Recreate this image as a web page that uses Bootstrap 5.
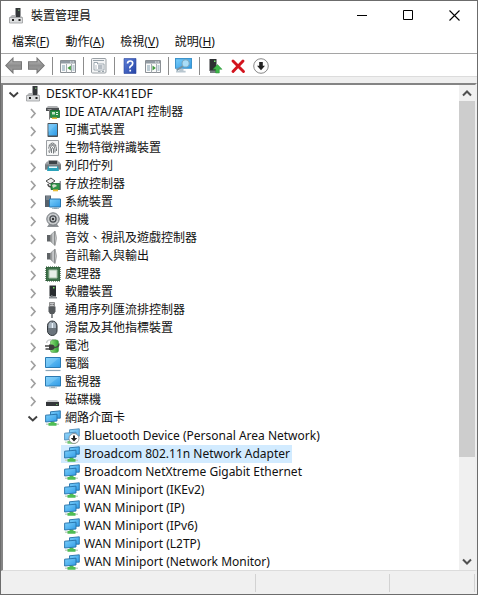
<!DOCTYPE html>
<html lang="zh-Hant">
<head>
<meta charset="utf-8">
<meta name="viewport" content="width=device-width, initial-scale=1">
<title>裝置管理員</title>
<link href="https://cdn.jsdelivr.net/npm/bootstrap@5.3.0/dist/css/bootstrap.min.css" rel="stylesheet">
<style>
  body { font-family: "Noto Sans", "Noto Sans CJK TC", sans-serif; font-size: 12px; line-height: 18px; color: #111; }
  button { background: none; border: 0; padding: 0; color: inherit; }
  svg { display: block; flex: none; }
  .window { border: 1px solid #6c6c6c; background: #fff; }
  .titlebar { height: 30px; padding-left: 8px; gap: 6px; }
  .caption-btn { width: 46px; height: 28px; }
  .menubar { height: 22px; padding-left: 11px; gap: 16px; }
  .toolbar { height: 24px; border-top: 1px solid #a5a5a5; border-bottom: 1px solid #dcdcdc; padding: 2px 0 0 1px; }
  .tool-btn { width: 23px; height: 20px; }
  .divider { width: 8px; height: 18px; background: linear-gradient(#8c8c8c, #8c8c8c) center / 1px 100% no-repeat; }
  .strip { height: 6px; background: #efefef; }
  .pane { border-top: 2px solid #848484; border-left: 2px solid #848484; border-right: 2px solid #efefef; border-bottom: 1px solid #dcdcdc; min-height: 0; }
  .tree { padding-left: 3px; min-width: 0; white-space: nowrap; }
  .tree ul { padding-left: 19px; }
  .node { height: 18px; }
  .toggle { width: 17px; height: 18px; }
  .leaf { padding-left: 17px; }
  .item { padding: 0 2px 0 3px; gap: 4px; height: 18px; }
  .item.selected { background: #d2ebff; }
  .scroller { width: 16px; background: #f0f0f0; }
  .scroller button { height: 16px; }
  .thumb { background: #cdcdcd; flex: 355 0 0; }
  .track { flex: 97 0 0; }
  .statusbar { height: 23px; background: #f0f0f0; padding: 3px 2px 2px 0; }
  .cell { border-right: 1px solid #d2d2d2; }
  .cell-a { flex: 256 0 0; }
  .cell-b { flex: 133 0 0; }
  .cell-c { flex: 85 0 0; }
</style>
</head>
<body>
<svg width="0" height="0" class="position-absolute" aria-hidden="true">
  <defs>
    <linearGradient id="blue" x1="0" y1="0" x2="1" y2="1"><stop offset="0" stop-color="#7cd0fb"/><stop offset="1" stop-color="#2f9ae6"/></linearGradient>
    <linearGradient id="grey" x1="0" y1="0" x2="0" y2="1"><stop offset="0" stop-color="#c4c4c4"/><stop offset=".5" stop-color="#8d8d8d"/><stop offset="1" stop-color="#a8a8a8"/></linearGradient>
    <linearGradient id="cone" x1="0" y1="0" x2="1" y2="0"><stop offset="0" stop-color="#777"/><stop offset=".6" stop-color="#d5d8da"/><stop offset="1" stop-color="#777"/></linearGradient>
    <linearGradient id="navy" x1="0" y1="0" x2="1" y2="1"><stop offset="0" stop-color="#5d7fd8"/><stop offset="1" stop-color="#2443a5"/></linearGradient>
    <linearGradient id="cell" x1="0" y1="0" x2="1" y2="0"><stop offset="0" stop-color="#8fe07a"/><stop offset="1" stop-color="#2d9c31"/></linearGradient>

    <symbol id="closed" viewBox="0 0 16 18"><path d="M6 6l4 4.500L6 15" fill="none" stroke="#a0a0a0" stroke-width="1.700"/></symbol>
    <symbol id="open" viewBox="0 0 16 18"><path d="M3.500 7.500l4.300 4 4.200-4" fill="none" stroke="#404040" stroke-width="1.900"/></symbol>

    <symbol id="root" viewBox="0 0 16 16"><path d="M6.500 0h5v9.500h-5z" fill="#34373a"/><path d="M9 1.500h1.500V3H9z" fill="#6b9c68"/><path d="M.500 9.500L3 7h3.500v2.500h5V7.500L13.500 9.500z" fill="#b4b6b8"/><path d="M.500 9.500h13v5.500H.500z" fill="#dcdedf" stroke="#9a9c9e" stroke-width=".8"/><path d="M3 11h2v2H3zM9.500 11h2v2h-2z" fill="#222"/></symbol>
    <symbol id="ide" viewBox="0 0 16 16"><path d="M1 4l2-2h9l2 2v3H1z" fill="#b0b2b4"/><path d="M1 4h13v3H1z" fill="#4c4f52"/><path d="M2.500 5h4v1h-4z" fill="#999"/><path d="M5.500 6.500h9v7h-9z" fill="#278f43" stroke="#176a2e" stroke-width=".8"/><path d="M7 8h3v2.500H7z" fill="#bfe2c5"/><path d="M11 8h2v1h-2zM11 10h2v1h-2z" fill="#e4f3e6"/><path d="M7 13.500h5v1.500H7z" fill="#e2b93c"/><path d="M4.500 6v9.500" stroke="#777"/></symbol>
    <symbol id="portable" viewBox="0 0 16 16"><rect x="2.500" y="1" width="10.500" height="14" rx=".8" fill="#4b5157"/><path d="M3.500 2h8.500v11.500H3.500z" fill="url(#blue)"/><path d="M3.500 2h8.500L3.500 10z" fill="#7fc8f8" opacity=".5"/></symbol>
    <symbol id="finger" viewBox="0 0 16 16"><path d="M1.500.500h12v15h-12z" fill="#f6f7f7" stroke="#9a9ea2"/><g fill="none" stroke="#565a5e" stroke-width=".8"><path d="M4 5.500q3.500-5 7 0M3.500 8.500q0-4 4-4t4 4v2.500M5 11.500q0-6 2.500-6t2.500 4v3M6.500 13V9q1-3 2 0v4.500M3.800 10.500q.5 2 .7 2.500"/></g></symbol>
    <symbol id="printer" viewBox="0 0 16 16"><path d="M3.500 2.500h9v4h-9z" fill="#3c4247"/><path d="M0 6l2-2.500h1.500V6h9V3.500H14L16 6v5.500H0z" fill="#9ba0a4"/><path d="M0 6.500h16v5H0z" fill="#767c80"/><path d="M3 8.500h10l1 4.500H2z" fill="#2ba2ba"/><path d="M4 8.500h8V10H4z" fill="#e8f7fa"/></symbol>
    <symbol id="storage" viewBox="0 0 16 16"><path d="M1 5l5-3 4 3-5 3z" fill="#eee" stroke="#4b4b4b"/><path d="M3 8q0 3 4 3" fill="none" stroke="#4b4b4b" stroke-width="1.500"/><path d="M6 7.500h9v6H6z" fill="#2f9448" stroke="#1b6930" stroke-width=".8"/><path d="M7 9q3-2 5 1l-4 2z" fill="#d5dccf"/><path d="M8 13.500h5v1.800H8z" fill="#e9bf38"/><path d="M15.200 5v9" stroke="#667"/></symbol>
    <symbol id="system" viewBox="0 0 16 16"><path d="M0 1.500h6v11.500H0z" fill="#56616b"/><path d="M1 3h4M1 5h4" stroke="#9aa5ad"/><path d="M4.500 5h11v8h-11z" fill="url(#blue)" stroke="#2675ac"/><path d="M9 13.500h3v.8h2v.7H7v-.7h2z" fill="#8aa5b4"/></symbol>
    <symbol id="camera" viewBox="0 0 16 16"><path d="M4 12h8l2 3H2z" fill="#8d9195"/><circle cx="8" cy="7" r="6.200" fill="#c8cbcd" stroke="#70757a"/><circle cx="8" cy="7" r="3.700" fill="#4a4e52"/><circle cx="8" cy="7" r="2.400" fill="#c7cbce"/><circle cx="8" cy="7" r="1.200" fill="#333"/></symbol>
    <symbol id="speaker" viewBox="0 0 16 16"><path d="M2 5h3.500v6.500H2z" fill="#5f6366"/><path d="M5.500 5L10 1v14.500l-4.500-4z" fill="url(#cone)" stroke="#85898c" stroke-width=".6"/><path d="M10 1q3 7 0 14.500" fill="#c4c6c8" stroke="#888" stroke-width=".6"/></symbol>
    <symbol id="cpu" viewBox="0 0 16 16"><path d="M1 1h14v14H1z" fill="#31603b" stroke="#234b2b" stroke-dasharray="1 1" stroke-width="1.200"/><path d="M1.500 1.500h13v13h-13z" fill="#3d7049"/><path d="M4 4h8v8H4z" fill="#e7efe8" stroke="#a4c0a7"/></symbol>
    <symbol id="software" viewBox="0 0 16 16"><path d="M4.500 1.500h6.500v11H4.500z" fill="#292d30"/><path d="M8 3h1.500v1.500H8z" fill="#6de261"/><path d="M6 11h1.500v2H6z" fill="#6b7276"/><path d="M4 13h8v1.500H4z" fill="#8a9094"/></symbol>
    <symbol id="usb" viewBox="0 0 16 16"><path d="M4.500.500h5v4h-5z" fill="#d1d3d5" stroke="#777" stroke-width=".8"/><path d="M5.500 1.800h.9v1.500h-.9zM7.700 1.800h.9v1.500h-.9z" fill="#333"/><path d="M3.500 4.500h7v5L9 12H5L3.500 9.500z" fill="#55595c"/><path d="M7 12v4" stroke="#4b4f52" stroke-width="1.300"/></symbol>
    <symbol id="mouse" viewBox="0 0 16 16"><rect x="2.500" y="1" width="9.500" height="14.500" rx="4.700" fill="#6b747c" stroke="#30363b"/><path d="M3.500 6q0-4 3.200-4.500V8H3.500zM7.800 1.500Q11 2 11 6v2H7.800z" fill="#a7b3bd"/><path d="M7.300 3v5" stroke="#e7f2fa" stroke-width="1.400"/></symbol>
    <symbol id="battery" viewBox="0 0 16 16"><path d="M7 1h4v1.500H7z" fill="#ccc"/><rect x="5.500" y="2" width="8" height="12.500" rx="2" fill="url(#cell)" stroke="#4d9c4c" stroke-width=".6"/><path d="M1.500 5q1-4 5-3" fill="none" stroke="#c9cccd" stroke-width="1.300"/><path d="M0 8h4M.5 11h4" stroke="#444" stroke-width="1.300"/><path d="M4 6.500h2.500q3 0 3 2.800t-3 2.700H4z" fill="#3d3d3d"/><path d="M9 9.500q5 0 5-4" fill="none" stroke="#444" stroke-width="1.300"/></symbol>
    <symbol id="computer" viewBox="0 0 16 16"><path d="M.500 1.500h15v10H.500z" fill="url(#blue)" stroke="#2b7ab2"/><path d="M1 2h13L3 11H1z" fill="#9adafd" opacity=".35"/><path d="M.5 14.500h15" stroke="#8ba6b8" stroke-width="1.200"/></symbol>
    <symbol id="monitor" viewBox="0 0 16 16"><path d="M.500 2.500h15v9.500H.500z" fill="url(#blue)" stroke="#2b7ab2"/><path d="M1 3h13L3 11.500H1z" fill="#9adafd" opacity=".35"/><path d="M6 12.500h4v1h2v.7H4v-.7h2z" fill="#9aaeb9"/></symbol>
    <symbol id="disk" viewBox="0 0 16 16"><path d="M1 10l2-2h9l2 2z" fill="#c9cbcd"/><path d="M1 10h13v4H1z" fill="#34373a"/><path d="M11 12h1.500v.8H11z" fill="#73dc68"/></symbol>
    <symbol id="net" viewBox="0 0 16 16"><path d="M1 13.500h13v1.500H1z" fill="#c5d3c6"/><path d="M5.500 11.500h4v1.500h2v2.700h-8V13h2z" fill="#4fbd55"/><path d="M5.500 1.800l9.800-1v7.400H5.500z" fill="url(#blue)" stroke="#2570a8" stroke-width=".9"/><path d="M.600 5.200l11.400-1v6.800L.600 12z" fill="url(#blue)" stroke="#2570a8" stroke-width=".9"/></symbol>
    <symbol id="netdown" viewBox="0 0 16 16"><use href="#net" opacity=".8"/><circle cx="10" cy="10.500" r="5" fill="#fff" stroke="#858585" stroke-width=".8"/><path d="M9 7.500h2v2.500h2.200L10 13.500 6.800 10H9z" fill="#222"/></symbol>

    <symbol id="left" viewBox="0 0 16 16"><path d="M.700 8L7.500 1V4.500h8v7h-8V15z" fill="url(#grey)" stroke="#777"/></symbol>
    <symbol id="right" viewBox="0 0 16 16"><path d="M15.300 8L8.500 1V4.500h-8v7h8V15z" fill="url(#grey)" stroke="#777"/></symbol>
    <symbol id="panel" viewBox="0 0 16 16"><path d="M.500 2.500h15v12H.500z" fill="#fafafa" stroke="#8b9095"/><path d="M1 3h14v2.500H1z" fill="#929ba3"/><path d="M10 4h4" stroke="#e9edf0" stroke-dasharray="1 .5"/><path d="M6.500 6v8.500M11.500 6v8.500" stroke="#a6adb3"/><path d="M2 8h3M2 10h3M2 12h3M12.500 8h2M12.500 10h2M12.500 12h2" stroke="#7f9dae"/></symbol>
    <symbol id="props" viewBox="0 0 16 16"><rect x=".500" y=".500" width="14.500" height="14.500" rx="1" fill="#f2f3f4" stroke="#9aa0a5"/><path d="M2 2.500h11" stroke="#9aa5ad"/><path d="M3 4.500h3.500V6H13v6H3z" fill="#fff" stroke="#8895a0" stroke-width=".8"/><path d="M4.500 8h1M7 8h4.500M4.500 10h1M7 10h4.500" stroke="#6d7b88"/><path d="M7 13.500h2.500M11 13.500h2" stroke="#9aa5ad"/></symbol>
    <symbol id="magnify" viewBox="0 0 16 16"><path d="M.500 1.500h15v9H.500z" fill="url(#blue)" stroke="#3d94cc"/><path d="M4 11h4v2h2v1.500H1V13h3z" fill="#b8c6cf"/><path d="M7.500 8.500l-6 4" stroke="#75909f" stroke-width="1.500"/><circle cx="10" cy="6" r="3.400" fill="#a9ddf8" stroke="#7ba5bc"/></symbol>
    <symbol id="update" viewBox="0 0 16 16"><path d="M2.500 1h7v12h-7z" fill="#2c2f31"/><path d="M7 2.500h1.500V4H7z" fill="#7be473"/><path d="M3 12.500h6V15H3z" fill="#777e82"/><path d="M10.500 6.500l4.500 4.800h-2.700V15H8.700v-3.700H6z" fill="#3fb84a" stroke="#278e33" stroke-width=".5"/></symbol>
    <symbol id="cross" viewBox="0 0 16 16"><path d="M3 3L13.500 13.500M13 3L3 13.500" stroke="#d3141e" stroke-width="2.900" stroke-linecap="round"/></symbol>
    <symbol id="disable" viewBox="0 0 16 16"><circle cx="8" cy="8" r="7.300" fill="#fdfdfd" stroke="#888"/><path d="M6.200 4h3.600v3.800H12L8 12.200 4 7.800h2.200z" fill="#202020"/></symbol>
  </defs>
</svg>

<div class="window vh-100 d-flex flex-column overflow-hidden">
  <header class="titlebar d-flex align-items-center">
    <svg width="16" height="16" aria-hidden="true"><use href="#root"/></svg>
    <span class="flex-grow-1">裝置管理員</span>
    <div class="d-flex">
      <button type="button" class="caption-btn d-flex align-items-center justify-content-center" aria-label="最小化"><svg width="11" height="11"><path d="M0 5.500h10" stroke="#000"/></svg></button>
      <button type="button" class="caption-btn d-flex align-items-center justify-content-center" aria-label="最大化"><svg width="11" height="11"><path d="M.500.500h9v9h-9z" fill="none" stroke="#000"/></svg></button>
      <button type="button" class="caption-btn d-flex align-items-center justify-content-center" aria-label="關閉"><svg width="11" height="11"><path d="M.500.500l10 10M10.500.500l-10 10" stroke="#000" stroke-width="1.100"/></svg></button>
    </div>
  </header>

  <nav class="menubar d-flex align-items-center" aria-label="功能表">
    <button type="button">檔案(<u>F</u>)</button>
    <button type="button">動作(<u>A</u>)</button>
    <button type="button">檢視(<u>V</u>)</button>
    <button type="button">說明(<u>H</u>)</button>
  </nav>

  <div class="toolbar d-flex align-items-center" role="toolbar" aria-label="工具列">
    <button type="button" class="tool-btn d-flex align-items-center justify-content-center" aria-label="上一頁"><svg width="17" height="17"><use href="#left"/></svg></button>
    <button type="button" class="tool-btn d-flex align-items-center justify-content-center" aria-label="下一頁"><svg width="17" height="17"><use href="#right"/></svg></button>
    <span class="divider"></span>
    <button type="button" class="tool-btn d-flex align-items-center justify-content-center" aria-label="主控台樹狀目錄"><svg width="16" height="16" viewBox="0 0 16 16"><use href="#panel"/><path d="M10.800 7.500v5L7.500 10z" fill="#3f9a3c"/></svg></button>
    <span class="divider"></span>
    <button type="button" class="tool-btn d-flex align-items-center justify-content-center" aria-label="內容"><svg width="16" height="16"><use href="#props"/></svg></button>
    <span class="divider"></span>
    <button type="button" class="tool-btn d-flex align-items-center justify-content-center" aria-label="說明"><svg width="16" height="16" viewBox="0 0 16 16"><path d="M2 .500h12v15H2z" fill="url(#navy)" stroke="#2a449c" stroke-width=".6"/><path d="M5.500 5.500Q5.700 3 8.200 3t2.500 2.300Q10.700 7 9 8T8.200 10.200M8.200 11.800v1.700" fill="none" stroke="#fff" stroke-width="1.700"/></svg></button>
    <button type="button" class="tool-btn d-flex align-items-center justify-content-center" aria-label="動作窗格"><svg width="16" height="16" viewBox="0 0 16 16"><use href="#panel"/><path d="M7.500 7.500v5l3.300-2.500z" fill="#3f9a3c"/></svg></button>
    <span class="divider"></span>
    <button type="button" class="tool-btn d-flex align-items-center justify-content-center" aria-label="掃描硬體變更"><svg width="17" height="17"><use href="#magnify"/></svg></button>
    <span class="divider"></span>
    <button type="button" class="tool-btn d-flex align-items-center justify-content-center" aria-label="更新驅動程式"><svg width="16" height="16"><use href="#update"/></svg></button>
    <button type="button" class="tool-btn d-flex align-items-center justify-content-center" aria-label="解除安裝裝置"><svg width="16" height="16"><use href="#cross"/></svg></button>
    <button type="button" class="tool-btn d-flex align-items-center justify-content-center" aria-label="停用裝置"><svg width="16" height="16"><use href="#disable"/></svg></button>
  </div>
  <div class="strip flex-shrink-0"></div>

  <main class="pane d-flex flex-grow-1 overflow-hidden">
    <div class="tree flex-grow-1 overflow-hidden">
      <div class="node d-flex"><button type="button" class="toggle" aria-label="摺疊"><svg width="16" height="18"><use href="#open"/></svg></button><span class="item d-flex align-items-center"><svg width="16" height="16"><use href="#root"/></svg>DESKTOP-KK41EDF</span></div>
      <ul class="list-unstyled mb-0" id="categories"></ul>
    </div>
    <div class="scroller d-flex flex-column flex-shrink-0">
      <button type="button" class="d-flex align-items-center justify-content-center" aria-label="向上捲動"><svg width="10" height="8"><path d="M1 6.500l4-4 4 4" fill="none" stroke="#505050" stroke-width="2"/></svg></button>
      <div class="thumb"></div>
      <div class="track"></div>
      <button type="button" class="d-flex align-items-center justify-content-center" aria-label="向下捲動"><svg width="10" height="8"><path d="M1 1.500l4 4 4-4" fill="none" stroke="#505050" stroke-width="2"/></svg></button>
    </div>
  </main>

  <footer class="statusbar d-flex flex-shrink-0">
    <div class="cell cell-a"></div>
    <div class="cell cell-b"></div>
    <div class="cell cell-c"></div>
  </footer>
</div>

<script src="https://cdn.jsdelivr.net/npm/bootstrap@5.3.0/dist/js/bootstrap.bundle.min.js"></script>
<script>
  const categories = [
    ['ide', 'IDE ATA/ATAPI 控制器'], ['portable', '可攜式裝置'], ['finger', '生物特徵辨識裝置'],
    ['printer', '列印佇列'], ['storage', '存放控制器'], ['system', '系統裝置'], ['camera', '相機'],
    ['speaker', '音效、視訊及遊戲控制器'], ['speaker', '音訊輸入與輸出'], ['cpu', '處理器'],
    ['software', '軟體裝置'], ['usb', '通用序列匯流排控制器'], ['mouse', '滑鼠及其他指標裝置'],
    ['battery', '電池'], ['computer', '電腦'], ['monitor', '監視器'], ['disk', '磁碟機'],
    ['net', '網路介面卡', [
      ['netdown', 'Bluetooth Device (Personal Area Network)'],
      ['net', 'Broadcom 802.11n Network Adapter', 'selected'],
      ['net', 'Broadcom NetXtreme Gigabit Ethernet'],
      ['net', 'WAN Miniport (IKEv2)'], ['net', 'WAN Miniport (IP)'], ['net', 'WAN Miniport (IPv6)'],
      ['net', 'WAN Miniport (L2TP)'], ['net', 'WAN Miniport (Network Monitor)']
    ]]
  ];
  const item = (icon, label, state = '') =>
    `<span class="item d-flex align-items-center ${state}"><svg width="16" height="16"><use href="#${icon}"/></svg>${label}</span>`;
  document.getElementById('categories').innerHTML = categories.map(([icon, label, devices]) =>
    `<li><div class="node d-flex"><button type="button" class="toggle" aria-label="${devices ? '摺疊' : '展開'}"><svg width="16" height="18"><use href="#${devices ? 'open' : 'closed'}"/></svg></button>${item(icon, label)}</div>` +
    (devices ? `<ul class="list-unstyled mb-0">${devices.map(d => `<li class="node leaf d-flex">${item(...d)}</li>`).join('')}</ul>` : '') +
    '</li>').join('');
</script>
</body>
</html>
